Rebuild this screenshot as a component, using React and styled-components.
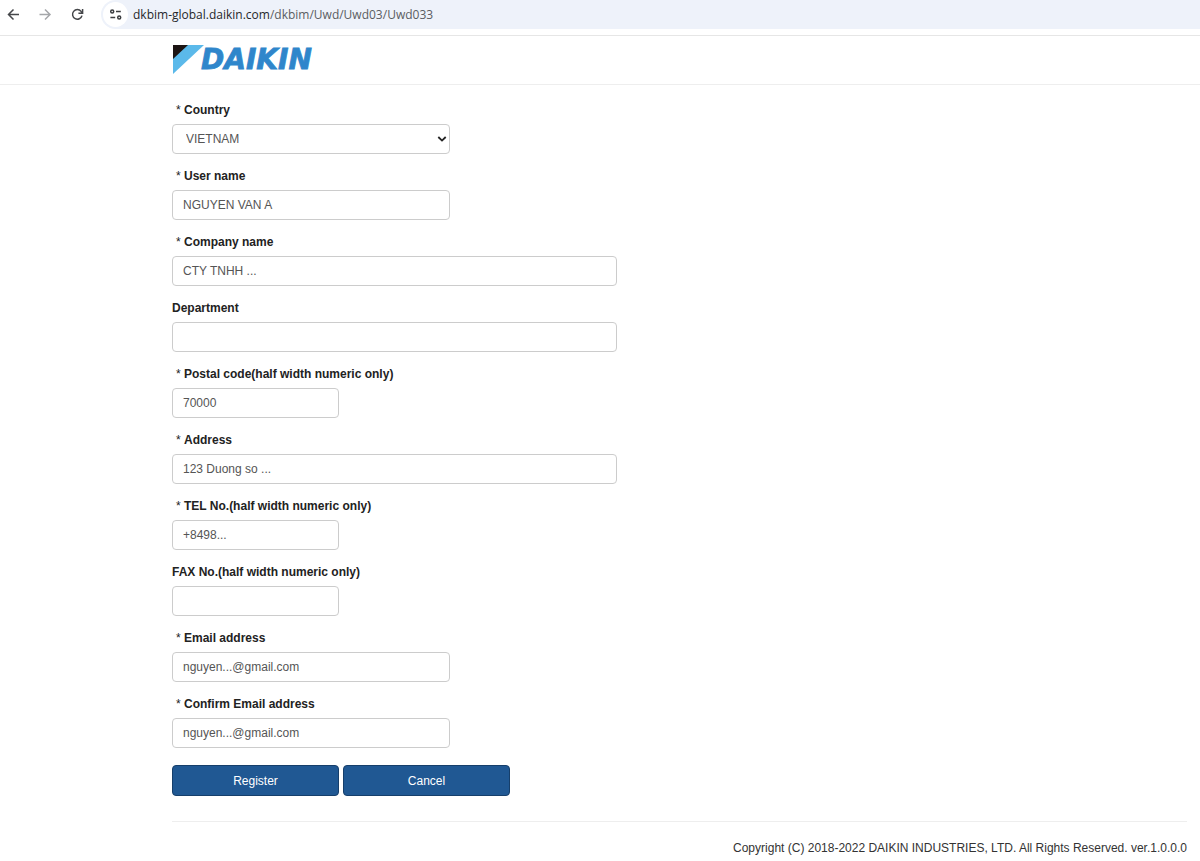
import React from "react";
import styled, { createGlobalStyle } from "styled-components";

const GlobalStyle = createGlobalStyle`
  *, *::before, *::after { box-sizing: border-box; }
  body {
    margin: 0;
    background: #fff;
    color: #333;
    font: 12px/18px "Liberation Sans", Arial, sans-serif;
  }
`;

const BrowserBar = styled.div`
  display: flex;
  align-items: center;
  height: 29px;
  padding-left: 5px;
`;

const NavButton = styled.button`
  display: flex;
  align-items: center;
  justify-content: center;
  width: 16px;
  height: 28px;
  margin-right: 16px;
  padding: 0;
  border: 0;
  background: none;
  color: ${(p) => (p.$muted ? "#a5a7aa" : "#45474a")};
`;

const AddressBar = styled.div`
  display: flex;
  flex: 1;
  align-items: center;
  gap: 5px;
  height: 29px;
  padding-left: 2px;
  border-radius: 15px 0 0 15px;
  background: #eef2fa;
`;

const SiteButton = styled.button`
  display: flex;
  align-items: center;
  justify-content: center;
  width: 25px;
  height: 25px;
  padding: 0;
  border: 0;
  border-radius: 50%;
  background: #fff;
  color: #3c3e41;
`;

const UrlText = styled.span`
  color: #5a5d62;
  font: 12px/18px "Open Sans", "Noto Sans", sans-serif;
  white-space: nowrap;
`;

const UrlHost = styled.span`
  color: #25272a;
`;

const SiteHeader = styled.header`
  margin-top: 6px;
  padding: 8px 13px 9px 172px;
  border-top: 1px solid #e6e6e6;
  border-bottom: 1px solid #eee;
`;

const HomeLink = styled.a`
  display: block;
  width: 150px;
  height: 31px;
`;

const Logo = styled.svg`
  display: block;
`;

const Content = styled.main`
  padding: 16px 13px 0 172px;
`;

const Form = styled.form`
  display: flex;
  flex-direction: column;
  gap: 13px;
`;

const Field = styled.div`
  display: flex;
  flex-direction: column;
  gap: 5px;
`;

const Label = styled.label`
  padding-left: ${(p) => (p.$required ? 4 : 0)}px;
  color: #222;
  font-weight: 700;
`;

const Mark = styled.span`
  font-weight: 400;
`;

const widths = { small: 167, medium: 278, large: 445 };

const TextBox = styled.input`
  width: 100%;
  max-width: ${(p) => widths[p.$size]}px;
  height: 30px;
  padding: 0 10px;
  border: 1px solid #ccc;
  border-radius: 4px;
  background: #fff;
  color: #555;
  font: inherit;
`;

const SelectWrap = styled.div`
  display: grid;
  align-items: center;
  width: 100%;
  max-width: ${widths.medium}px;

  > * { grid-area: 1 / 1; }

  > svg {
    justify-self: end;
    margin-right: 3px;
    pointer-events: none;
  }
`;

const Select = styled.select`
  width: 100%;
  height: 30px;
  padding: 0 24px 0 13px;
  border: 1px solid #ccc;
  border-radius: 4px;
  appearance: none;
  background: #fff;
  color: #555;
  font: inherit;
`;

const Actions = styled.div`
  display: flex;
  gap: 4px;
  padding-top: 4px;
`;

const ActionButton = styled.button`
  width: 167px;
  height: 31px;
  padding: 0;
  border: 1px solid #163f6b;
  border-radius: 4px;
  background: #205893;
  color: #fff;
  font: inherit;
`;

const Footer = styled.footer`
  margin: 25px 13px 0 172px;
  padding: 17px 0 4px;
  border-top: 1px solid #eee;
  text-align: right;
`;

const fields = [
  { id: "user", label: "User name", required: true, size: "medium", value: "NGUYEN VAN A" },
  { id: "company", label: "Company name", required: true, size: "large", value: "CTY TNHH ..." },
  { id: "department", label: "Department", size: "large", value: "" },
  { id: "postal", label: "Postal code(half width numeric only)", required: true, size: "small", value: "70000" },
  { id: "address", label: "Address", required: true, size: "large", value: "123 Duong so ..." },
  { id: "tel", label: "TEL No.(half width numeric only)", required: true, size: "small", value: "+8498..." },
  { id: "fax", label: "FAX No.(half width numeric only)", size: "small", value: "" },
  { id: "email", label: "Email address", required: true, size: "medium", value: "nguyen...@gmail.com" },
  { id: "confirm", label: "Confirm Email address", required: true, size: "medium", value: "nguyen...@gmail.com" },
];

function FieldLabel({ id, required, children }) {
  return (
    <Label htmlFor={id} $required={required}>
      {required && <Mark>* </Mark>}
      {children}
    </Label>
  );
}

const stroke = { fill: "none", stroke: "currentColor", strokeWidth: 1.5 };

export default function App() {
  return (
    <>
      <GlobalStyle />
      <BrowserBar>
        <NavButton type="button" aria-label="Back">
          <svg width="16" height="16" viewBox="0 0 16 16" {...stroke}>
            <path d="M14 7.5H3.5M8.5 2.5 3.5 7.5 8.5 12.5" />
          </svg>
        </NavButton>
        <NavButton type="button" aria-label="Forward" $muted>
          <svg width="16" height="16" viewBox="0 0 16 16" {...stroke}>
            <path d="M2.5 7.5h10.5M8 2.5l5 5-5 5" />
          </svg>
        </NavButton>
        <NavButton type="button" aria-label="Reload">
          <svg width="16" height="16" viewBox="0 0 16 16" {...stroke}>
            <path d="M13 8.6A4.8 4.8 0 1 1 12.1 4.4L13.2 5.6M13.6 2v4.2H9.4" />
          </svg>
        </NavButton>
        <AddressBar>
          <SiteButton type="button" aria-label="Site information">
            <svg width="14" height="14" viewBox="0 0 14 14" {...stroke}>
              <circle cx="3.2" cy="3.5" r="1.5" />
              <path d="M7 3.5h4.8M1.4 9.5h4.8" />
              <circle cx="10.2" cy="9.5" r="1.5" />
            </svg>
          </SiteButton>
          <UrlText>
            <UrlHost>dkbim-global.daikin.com</UrlHost>/dkbim/Uwd/Uwd03/Uwd033
          </UrlText>
        </AddressBar>
      </BrowserBar>

      <SiteHeader>
        <HomeLink href="#" aria-label="Daikin home">
          <Logo width="150" height="31" viewBox="0 0 150 31">
            <path d="M1 1H32L1 30Z" fill="#5bb9ea" />
            <path d="M1 1H16L1 15Z" fill="#1c1413" />
            <text
              x="29"
              y="25"
              fill="#2f86cb"
              stroke="#2f86cb"
              strokeWidth="0.8"
              fontFamily="DejaVu Sans, sans-serif"
              fontSize="28"
              fontStyle="italic"
              fontWeight="700"
            >
              DAIKIN
            </text>
          </Logo>
        </HomeLink>
      </SiteHeader>

      <Content>
        <Form onSubmit={(e) => e.preventDefault()}>
          <Field>
            <FieldLabel id="country" required>Country</FieldLabel>
            <SelectWrap>
              <Select id="country" defaultValue="VIETNAM">
                <option>VIETNAM</option>
              </Select>
              <svg width="10" height="8" viewBox="0 0 10 8" fill="none" stroke="#222" strokeWidth="1.8">
                <path d="M1.3 2 5 5.6 8.7 2" />
              </svg>
            </SelectWrap>
          </Field>
          {fields.map((f) => (
            <Field key={f.id}>
              <FieldLabel id={f.id} required={f.required}>{f.label}</FieldLabel>
              <TextBox id={f.id} $size={f.size} defaultValue={f.value} />
            </Field>
          ))}
          <Actions>
            <ActionButton type="submit">Register</ActionButton>
            <ActionButton type="button">Cancel</ActionButton>
          </Actions>
        </Form>
      </Content>

      <Footer>Copyright (C) 2018-2022 DAIKIN INDUSTRIES, LTD. All Rights Reserved. ver.1.0.0.0</Footer>
    </>
  );
}
